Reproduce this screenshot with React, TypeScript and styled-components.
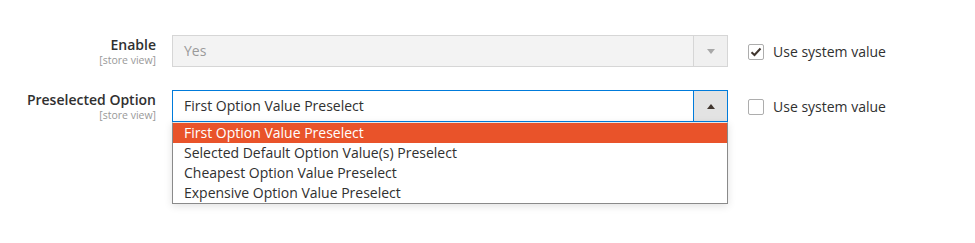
import React from "react";
import styled, { createGlobalStyle, css } from "styled-components";

const Global = createGlobalStyle`
  html, body { margin: 0; padding: 0; background: #fff; }
  body { font-family: "Open Sans", "Noto Sans", sans-serif; color: #303030; }
  * { box-sizing: border-box; }
`;

const Form = styled.div`
  display: flex;
  flex-direction: column;
  gap: 23px;
  padding-top: 35px;
  min-height: 243px;
`;

const Field = styled.div`
  display: flex;
  align-items: flex-start;
`;

const LabelCol = styled.div`
  width: 156px;
  padding-top: 0;
  display: flex;
  flex-direction: column;
  align-items: flex-end;
  text-align: right;
`;

const LabelText = styled.span`
  font-size: 14px;
  font-weight: 600;
  line-height: 20px;
  color: #303030;
`;

const Scope = styled.span`
  font-size: 10.5px;
  line-height: 11px;
  color: #999;
`;

const Control = styled.div`
  position: relative;
  width: 556px;
  margin-left: 16px;
`;

const SelectBox = styled.div<{ $disabled?: boolean; $open?: boolean }>`
  display: flex;
  height: 32px;
  border: 1px solid #adadad;
  background: #fff;
  ${(p) =>
    p.$disabled &&
    css`
      border-color: #d6d6d6;
      background: #f3f3f3;
    `}
  ${(p) =>
    p.$open &&
    css`
      border-color: #007bdb;
    `}
`;

const Value = styled.div<{ $disabled?: boolean }>`
  flex: 1;
  padding-left: 11px;
  font-size: 14px;
  line-height: 30px;
  color: ${(p) => (p.$disabled ? "#9a9a9a" : "#303030")};
`;

const ArrowBtn = styled.div<{ $disabled?: boolean; $open?: boolean }>`
  width: 34px;
  display: flex;
  align-items: center;
  justify-content: center;
  border-left: 1px solid ${(p) => (p.$open ? "#007bdb" : "#d6d6d6")};
  background: ${(p) => (p.$disabled ? "#f0f0f0" : "#e3e3e3")};
`;

const Arrow = styled.span<{ $up?: boolean; $disabled?: boolean }>`
  width: 0;
  height: 0;
  border-left: 4px solid transparent;
  border-right: 4px solid transparent;
  ${(p) =>
    p.$up
      ? css`border-bottom: 5px solid #41362f;`
      : css`border-top: 5px solid ${p.$disabled ? "#a8a8a8" : "#41362f"};`}
`;

const List = styled.ul`
  position: absolute;
  top: 32px;
  left: 0;
  right: 0;
  margin: 0;
  padding: 0;
  list-style: none;
  background: #fff;
  border: 1px solid #8a8a8a;
  border-top: 1px solid #e6e6e6;
  box-shadow: 0 2px 8px rgba(0, 0, 0, 0.12);
  z-index: 2;
`;

const Item = styled.li<{ $active?: boolean }>`
  height: 20px;
  line-height: 20px;
  padding-left: 11px;
  font-size: 14px;
  color: ${(p) => (p.$active ? "#fff" : "#303030")};
  background: ${(p) => (p.$active ? "#e9532a" : "transparent")};
`;

const UseSystem = styled.label`
  display: flex;
  align-items: center;
  gap: 9px;
  margin-left: 20px;
  height: 32px;
  padding-top: 1px;
  font-size: 14px;
  color: #303030;
`;

const Check = styled.span`
  width: 16px;
  height: 16px;
  border: 1px solid #adadad;
  border-radius: 2px;
  background: #fff;
  display: flex;
  align-items: center;
  justify-content: center;
`;

const options = [
  "First Option Value Preselect",
  "Selected Default Option Value(s) Preselect",
  "Cheapest Option Value Preselect",
  "Expensive Option Value Preselect",
];

export default function App() {
  return (
    <>
      <Global />
      <Form>
        <Field>
          <LabelCol>
            <LabelText>Enable</LabelText>
            <Scope>[store view]</Scope>
          </LabelCol>
          <Control>
            <SelectBox $disabled>
              <Value $disabled>Yes</Value>
              <ArrowBtn $disabled>
                <Arrow $disabled />
              </ArrowBtn>
            </SelectBox>
          </Control>
          <UseSystem>
            <Check>
              <svg width="12" height="10" viewBox="0 0 12 10">
                <path d="M1.5 5.2 L4.5 8 L10.5 1.5" fill="none" stroke="#41362f" strokeWidth="2" />
              </svg>
            </Check>
            Use system value
          </UseSystem>
        </Field>
        <Field>
          <LabelCol>
            <LabelText>Preselected Option</LabelText>
            <Scope>[store view]</Scope>
          </LabelCol>
          <Control>
            <SelectBox $open>
              <Value>First Option Value Preselect</Value>
              <ArrowBtn $open>
                <Arrow $up />
              </ArrowBtn>
            </SelectBox>
            <List>
              {options.map((o, i) => (
                <Item key={o} $active={i === 0}>
                  {o}
                </Item>
              ))}
            </List>
          </Control>
          <UseSystem>
            <Check />
            Use system value
          </UseSystem>
        </Field>
      </Form>
    </>
  );
}
